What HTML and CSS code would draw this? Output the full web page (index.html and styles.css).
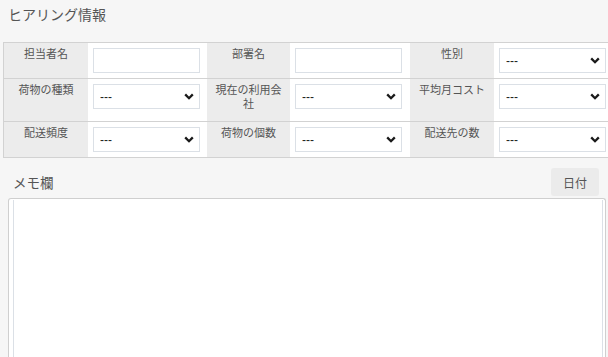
FILE: index.html
```html
<!DOCTYPE html>
<html lang="ja">
<head>
  <meta charset="UTF-8" />
  <meta name="viewport" content="width=device-width, initial-scale=1.0" />
  <title>ヒアリング情報</title>
  <link rel="stylesheet" href="styles.css">
</head>
<body>

  <div class="section-title">ヒアリング情報</div>

  <div class="table-wrap">
    <table class="hearing-table">
      <colgroup>
        <col class="col-label-a" />
        <col class="col-field-a" />
        <col class="col-label-b" />
        <col class="col-field-b" />
        <col class="col-label-a" />
        <col class="col-field-b" />
      </colgroup>
      <tr>
        <th>担当者名</th>
        <td><input class="field" type="text" /></td>
        <th>部署名</th>
        <td><input class="field" type="text" /></td>
        <th>性別</th>
        <td>
          <span class="select-wrap">
            <select class="field"><option>---</option></select>
            <svg class="chevron" width="10" height="7" viewBox="0 0 10 7"><path d="M1.2 1.4 L5 5.2 L8.8 1.4" /></svg>
          </span>
        </td>
      </tr>
      <tr>
        <th>荷物の種類</th>
        <td>
          <span class="select-wrap">
            <select class="field"><option>---</option></select>
            <svg class="chevron" width="10" height="7" viewBox="0 0 10 7"><path d="M1.2 1.4 L5 5.2 L8.8 1.4" /></svg>
          </span>
        </td>
        <th>現在の利用会社</th>
        <td>
          <span class="select-wrap">
            <select class="field"><option>---</option></select>
            <svg class="chevron" width="10" height="7" viewBox="0 0 10 7"><path d="M1.2 1.4 L5 5.2 L8.8 1.4" /></svg>
          </span>
        </td>
        <th>平均月コスト</th>
        <td>
          <span class="select-wrap">
            <select class="field"><option>---</option></select>
            <svg class="chevron" width="10" height="7" viewBox="0 0 10 7"><path d="M1.2 1.4 L5 5.2 L8.8 1.4" /></svg>
          </span>
        </td>
      </tr>
      <tr>
        <th>配送頻度</th>
        <td>
          <span class="select-wrap">
            <select class="field"><option>---</option></select>
            <svg class="chevron" width="10" height="7" viewBox="0 0 10 7"><path d="M1.2 1.4 L5 5.2 L8.8 1.4" /></svg>
          </span>
        </td>
        <th>荷物の個数</th>
        <td>
          <span class="select-wrap">
            <select class="field"><option>---</option></select>
            <svg class="chevron" width="10" height="7" viewBox="0 0 10 7"><path d="M1.2 1.4 L5 5.2 L8.8 1.4" /></svg>
          </span>
        </td>
        <th>配送先の数</th>
        <td>
          <span class="select-wrap">
            <select class="field"><option>---</option></select>
            <svg class="chevron" width="10" height="7" viewBox="0 0 10 7"><path d="M1.2 1.4 L5 5.2 L8.8 1.4" /></svg>
          </span>
        </td>
      </tr>
    </table>
  </div>

  <div class="memo-head">
    <span class="memo-title">メモ欄</span>
    <button class="date-btn" type="button">日付</button>
  </div>

  <div class="memo-box">
    <textarea class="memo-text"></textarea>
  </div>

</body>
</html>
```

FILE: styles.css
```css
body {
  margin: 0;
  background: #f6f6f6;
  font-family: "Liberation Sans", "Noto Sans CJK JP", sans-serif;
  color: #555;
  overflow: hidden;
}
.section-title {
  height: 42px;
  box-sizing: border-box;
  padding: 5px 8px;
  font-size: 14px;
  line-height: 20px;
  color: #555;
}
.table-wrap {
  padding-left: 3px;
  overflow: hidden;
}
.hearing-table {
  table-layout: fixed;
  width: 611px;
  border-spacing: 0;
  border-left: 1px solid #d2d2d2;
  border-top: 1px solid #d2d2d2;
}
.col-label-a { width: 84px; }
.col-field-a { width: 119px; }
.col-label-b { width: 83px; }
.col-field-b { width: 120px; }
.hearing-table th,
.hearing-table td {
  vertical-align: top;
  border-bottom: 1px solid #d2d2d2;
}
.hearing-table th {
  background: #ececec;
  font-weight: normal;
  font-size: 11px;
  line-height: 13.5px;
  color: #555;
  text-align: center;
  padding: 5px 5px 10px;
}
.hearing-table td {
  background: #fff;
  padding: 5px 0 5px 5px;
}
.field {
  display: block;
  width: 107px;
  height: 25px;
  box-sizing: border-box;
  margin: 0;
  border: 1px solid #dbe0e6;
  border-radius: 0;
  background: #fff;
  font-family: inherit;
  font-size: 12px;
  color: #222;
  padding: 0 6px;
  outline: none;
}
.select-wrap {
  position: relative;
  display: block;
  width: 107px;
}
select.field {
  appearance: none;
  -webkit-appearance: none;
}
.chevron {
  position: absolute;
  right: 6px;
  top: 9px;
  pointer-events: none;
}
.chevron path {
  fill: none;
  stroke: #1a1a1a;
  stroke-width: 2.3;
}
.memo-head {
  display: flex;
  justify-content: space-between;
  align-items: center;
  padding: 10px 9px 2px 13px;
}
.memo-title {
  font-size: 13.5px;
  color: #555;
}
.date-btn {
  width: 48px;
  height: 28px;
  border: none;
  border-radius: 3px;
  background: #ebebeb;
  font-family: inherit;
  font-size: 12px;
  color: #555;
  padding: 0;
}
.memo-box {
  margin-left: 8px;
  width: 598px;
  box-sizing: border-box;
  background: #fff;
  border: 1px solid #cfcfcf;
  border-bottom: none;
  border-radius: 3px 3px 0 0;
  padding: 1px 2px 0 4px;
}
.memo-text {
  display: block;
  width: 100%;
  height: 158px;
  box-sizing: border-box;
  margin: 0;
  border: 1px solid #dbe0e6;
  border-top: none;
  border-bottom: none;
  resize: none;
  outline: none;
}
```
